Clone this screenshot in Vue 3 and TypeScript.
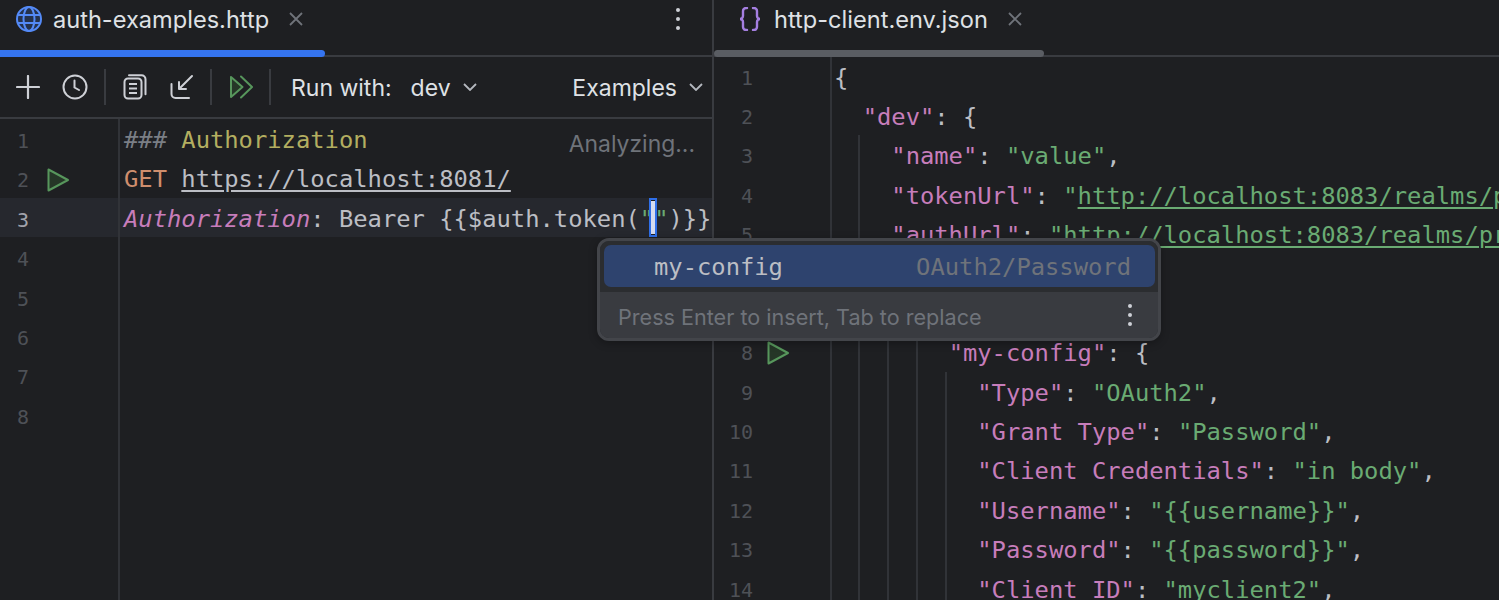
<script setup lang="ts">
type Seg = { t: string; c?: string }
type Line = { segs: Seg[]; run?: boolean }

const k = (t: string): Seg => ({ t, c: 'key' })
const s = (t: string): Seg => ({ t, c: 'str' })
const p = (t: string): Seg => ({ t })
const u = (t: string): Seg => ({ t, c: 'str link' })

const leftLines = [1, 2, 3, 4, 5, 6, 7, 8]

const rightLines: Line[] = [
  { segs: [p('{')] },
  { segs: [p('  '), k('"dev"'), p(': {')] },
  { segs: [p('    '), k('"name"'), p(': '), s('"value"'), p(',')] },
  { segs: [p('    '), k('"tokenUrl"'), p(': '), s('"'), u('http://localhost:8083/realms/protocol')] },
  { segs: [p('    '), k('"authUrl"'), p(': '), s('"'), u('http://localhost:8083/realms/protocol')] },
  { segs: [p('    '), k('"Security"'), p(': {')] },
  { segs: [p('      '), k('"Auth"'), p(': {')] },
  { segs: [p('        '), k('"my-config"'), p(': {')], run: true },
  { segs: [p('          '), k('"Type"'), p(': '), s('"OAuth2"'), p(',')] },
  { segs: [p('          '), k('"Grant Type"'), p(': '), s('"Password"'), p(',')] },
  { segs: [p('          '), k('"Client Credentials"'), p(': '), s('"in body"'), p(',')] },
  { segs: [p('          '), k('"Username"'), p(': '), s('"{{username}}"'), p(',')] },
  { segs: [p('          '), k('"Password"'), p(': '), s('"{{password}}"'), p(',')] },
  { segs: [p('          '), k('"Client ID"'), p(': '), s('"myclient2"'), p(',')] },
]

const guides = [
  { col: 0, top: 0 },
  { col: 1, top: 78 },
  { col: 2, top: 236 },
  { col: 3, top: 260 },
  { col: 4, top: 315 },
]
const guideStyle = (g: { col: number; top: number }) => ({
  left: `${g.col * 28.8 + 115.5}px`,
  top: `${g.top}px`,
})
</script>

<template>
  <div class="ide">
    <section class="pane left">
      <header class="tabs">
        <div class="tab tab-left">
          <svg class="tab-icon" width="26" height="26" viewBox="0 0 26 26" fill="none" stroke="#548af7" stroke-width="2">
            <circle cx="13" cy="13" r="12" fill="#25324d" />
            <ellipse cx="13" cy="13" rx="5.500" ry="12" />
            <path d="M1.500 9h23M1.500 17h23" />
          </svg>
          <span class="tab-name">auth-examples.http</span>
          <svg class="close" width="14" height="14" viewBox="0 0 14 14" stroke="#6f737a" stroke-width="1.8"><path d="M1 1l12 12M13 1L1 13" /></svg>
        </div>
        <span class="kebab">
          <i></i><i></i><i></i>
        </span>
        <div class="tab-line blue"></div>
      </header>

      <nav class="toolbar">
        <svg class="ti plus" width="24" height="24" viewBox="0 0 24 24" stroke="#ced0d6" stroke-width="2.2" stroke-linecap="round"><path d="M12 1v22M1 12h22" /></svg>
        <svg class="ti clock" width="26" height="26" viewBox="0 0 26 26" fill="none" stroke="#ced0d6" stroke-width="2"><circle cx="13" cy="13" r="11.5" /><path d="M12.500 6.500v7l4.500 2.500" stroke-linecap="round" /></svg>
        <b class="sep sep1"></b>
        <svg class="ti copy" width="24" height="26" viewBox="0 0 24 26" fill="none" stroke="#ced0d6" stroke-width="2"><rect x="1.500" y="4.500" width="17" height="20" rx="3.500" /><path d="M6 1.200h12.500a4 4 0 0 1 4 4v15" stroke-linecap="round" /><path d="M6 10h8M6 14.500h8M6 19h8" /></svg>
        <svg class="ti imp" width="24" height="26" viewBox="0 0 24 26" fill="none" stroke="#ced0d6" stroke-width="2" stroke-linecap="round" stroke-linejoin="round"><path d="M1.500 10v10a4 4 0 0 0 4 4H19" /><path d="M22 2L9 15M9 8v7h7" /></svg>
        <b class="sep sep2"></b>
        <svg class="ti runall" width="24" height="26" viewBox="0 0 24 26" fill="none" stroke="#57965c" stroke-width="2" stroke-linejoin="round" stroke-linecap="round"><path d="M2 3v20l11.500-10z" fill="#253627" /><path d="M12 2.500L23 13 12 23.500" /></svg>
        <b class="sep sep3"></b>
        <span class="tlabel">Run with:</span>
        <span class="tlabel dev">dev</span>
        <svg class="chev" width="14" height="8" viewBox="0 0 14 8" fill="none" stroke="#b4b8bf" stroke-width="1.800"><path d="M1 1l6 6 6-6" /></svg>
        <span class="spacer"></span>
        <span class="tlabel">Examples</span>
        <svg class="chev chev-end" width="14" height="8" viewBox="0 0 14 8" fill="none" stroke="#b4b8bf" stroke-width="1.800"><path d="M1 1l6 6 6-6" /></svg>
      </nav>

      <div class="editor left-editor">
        <div class="gutter left-gutter">
          <div v-for="n in leftLines" :key="n" class="gline" :class="{ current: n === 3 }">
            <span class="num">{{ n }}</span>
            <svg v-if="n === 2" class="run" width="24" height="26" viewBox="0 0 24 26" fill="#253627" stroke="#57965c" stroke-width="2" stroke-linejoin="round"><path d="M2.500 2.500v21L22 13z" /></svg>
          </div>
        </div>
        <div class="code left-code">
          <div class="cline"><span class="cmt">###</span> <span class="head">Authorization</span></div>
          <div class="cline"><span class="verb">GET</span> <span class="url">https://localhost:8081/</span></div>
          <div class="cline current"><span class="hname">Authorization</span>: Bearer &#123;&#123;$auth.token(<span class="str">"<span class="caret-anchor"><span class="caret"><i></i></span></span>"</span>)&#125;&#125;</div>
        </div>
        <span class="analyzing">Analyzing...</span>
      </div>
    </section>

    <section class="pane right">
      <header class="tabs">
        <div class="tab tab-right">
          <svg class="braces" width="22" height="24" viewBox="0 0 22 24" fill="none" stroke="#a57fe0" stroke-width="2.400" stroke-linecap="round"><path d="M8 1H7a3 3 0 0 0-3 3v5a3 3 0 0 1-3 3 3 3 0 0 1 3 3v5a3 3 0 0 0 3 3h1" /><path d="M14 1h1a3 3 0 0 1 3 3v5a3 3 0 0 0 3 3 3 3 0 0 0-3 3v5a3 3 0 0 1-3 3h-1" /></svg>
          <span class="tab-name">http-client.env.json</span>
          <svg class="close" width="14" height="14" viewBox="0 0 14 14" stroke="#6f737a" stroke-width="1.8"><path d="M1 1l12 12M13 1L1 13" /></svg>
        </div>
        <div class="tab-line grey"></div>
      </header>
      <div class="editor right-editor">
        <span v-for="g in guides" :key="g.col" class="guide" :style="guideStyle(g)"></span>
        <div v-for="(line, i) in rightLines" :key="i" class="rline">
          <div class="rgutter">
            <span class="num">{{ i + 1 }}</span>
            <svg v-if="line.run" class="run" width="24" height="26" viewBox="0 0 24 26" fill="#253627" stroke="#57965c" stroke-width="2" stroke-linejoin="round"><path d="M2.500 2.500v21L22 13z" /></svg>
          </div>
          <div class="rcode"><span v-for="(seg, j) in line.segs" :key="j" :class="seg.c">{{ seg.t }}</span></div>
        </div>
      </div>
    </section>

    <aside class="popup">
      <div class="plist">
        <div class="pitem">
          <span class="pname">my-config</span>
          <span class="ptype">OAuth2/Password</span>
        </div>
      </div>
      <div class="pfoot">
        <span>Press Enter to insert, Tab to replace</span>
        <span class="kebab small"><i></i><i></i><i></i></span>
      </div>
    </aside>
  </div>
</template>

<style>
html, body { margin: 0; background: #1e1f22; overflow: hidden; }
</style>

<style scoped>
.ide {
  position: relative;
  display: flex;
  width: 1499px;
  height: 600px;
  overflow: hidden;
  background: #1e1f22;
  color: #bcbec4;
  font-family: Inter, "Noto Sans", sans-serif;
}
.pane { display: flex; flex-direction: column; min-width: 0; height: 600px; overflow: hidden; }
.left { width: 712px; flex: none; border-right: 2px solid #393b40; }
.right { flex: 1; }
.tabs {
  position: relative;
  display: flex;
  align-items: center;
  height: 55px;
  flex: none;
  border-bottom: 2px solid #393b40;
}
.tab { display: flex; align-items: center; height: 100%; padding-bottom: 17px; box-sizing: border-box; }
.tab-left { padding-left: 16px; }
.tab-right { padding-left: 25px; }
.tab-icon { flex: none; }
.tab-name { margin-left: 11px; font-size: 23.6px; color: #dfe1e5; white-space: nowrap; }
.tab-right .tab-name { margin-left: 13px; }
.close { margin-left: 20px; flex: none; }
.braces { flex: none; }
.tab-line { position: absolute; left: 0; bottom: -2px; height: 7px; border-radius: 0 4px 4px 0; }
.tab-line.blue { width: 325px; background: #3574f0; }
.tab-line.grey { width: 330px; background: #5a5d63; border-radius: 4px; }
.kebab { display: inline-flex; flex-direction: column; gap: 5px; margin: 0 32px 17px auto; }
.kebab i { width: 4px; height: 4px; border-radius: 50%; background: #ced0d6; display: block; }
.toolbar {
  display: flex;
  align-items: center;
  height: 60px;
  flex: none;
  border-bottom: 2px solid #393b40;
  padding-left: 16px;
}
.ti { flex: none; }
.clock { margin-left: 22px; }
.sep { width: 2px; height: 36px; background: #393b40; flex: none; }
.sep1 { margin-left: 16px; }
.copy { margin-left: 17px; }
.imp { margin-left: 23px; }
.sep2 { margin-left: 16px; }
.runall { margin-left: 17px; }
.sep3 { margin-left: 16px; }
.tlabel { font-size: 23px; color: #dfe1e5; white-space: nowrap; padding-top: 2px; }
.sep3 + .tlabel { margin-left: 20px; }
.dev { margin-left: 19px; }
.chev { margin-left: 12px; flex: none; }
.chev-end { margin-left: 12px; margin-right: 9px; }
.spacer { flex: 1; }

.editor {
  position: relative;
  flex: 1;
  font-family: "DejaVu Sans Mono", monospace;
  font-size: 23.8px;
  white-space: pre;
  overflow: hidden;
}
.left-editor { display: flex; }
.left-gutter { width: 118px; flex: none; border-right: 2px solid #313338; height: 100%; }
.gline, .cline { height: 39.4px; }
.gline { position: relative; padding-left: 17px; line-height: 43.4px; }
.cline { line-height: 42.6px; }
.gline .run { position: absolute; left: 46px; top: 9px; }
.gline.current, .cline.current { background: #26282e; }
.num { font-size: 20px; color: #4e5157; }
.gline.current .num { color: #a1a3ab; }
.left-code { flex: 1; padding-left: 4px; min-width: 0; }
.cline { margin-left: -4px; padding-left: 4px; }
.cmt { color: #7a7e85; }
.head { color: #b3ae60; }
.verb { color: #cf8e6d; }
.url { text-decoration: underline; text-underline-offset: 3px; }
.hname { color: #c77dbb; font-style: italic; }
.str { color: #6aab73; }
.key { color: #c77dbb; }
.link { text-decoration: underline; text-underline-offset: 3px; }
.caret-anchor { position: relative; display: inline-block; width: 0; height: 0; }
.caret {
  position: absolute;
  left: -5px;
  top: -29px;
  width: 8px;
  height: 39px;
  box-sizing: border-box;
  background: #1e1f22;
  border: 2px solid #2f6fe8;
  display: flex;
  justify-content: center;
  align-items: center;
}
.caret i { width: 4px; height: 33px; background: #d5dbee; display: block; }
.analyzing {
  position: absolute;
  right: 17px;
  top: 11px;
  font: 22.9px Inter, sans-serif;
  color: #6f737a;
}

.right-editor { padding-top: 0.5px; }
.rline { display: flex; height: 39.4px; line-height: 39.4px; }
.rgutter { position: relative; width: 120px; flex: none; box-sizing: border-box; padding-right: 81px; text-align: right; }
.rgutter .run { position: absolute; left: 52px; top: 7px; }
.rcode { flex: 1; min-width: 0; overflow: hidden; line-height: 41px; height: 39.4px; }
.guide { position: absolute; width: 2px; bottom: 0; background: #313338; }

.popup {
  position: absolute;
  left: 597px;
  top: 238px;
  width: 564px;
  height: 103px;
  box-sizing: border-box;
  border: 3px solid #43454a;
  border-radius: 12px;
  overflow: hidden;
  display: flex;
  flex-direction: column;
  background: #2b2d30;
  box-shadow: 0 2px 8px rgba(0, 0, 0, .3);
}
.plist { height: 51px; flex: none; padding: 4px 3px 4px 4px; box-sizing: border-box; background: #2b2d30; }
.pitem {
  height: 42px;
  box-sizing: border-box;
  display: flex;
  align-items: center;
  justify-content: space-between;
  padding: 1px 24px 0 50px;
  border-radius: 7px;
  background: #2e436e;
  font: 23.8px "DejaVu Sans Mono", monospace;
}
.pname { color: #bcbec4; }
.ptype { color: #6f737a; }
.pfoot {
  flex: 1;
  display: flex;
  align-items: center;
  justify-content: space-between;
  padding: 3px 26px 0 18px;
  background: #393b40;
  font-size: 21.6px;
  color: #6f737a;
}
.kebab.small { margin: -3px 0 0; }
</style>
